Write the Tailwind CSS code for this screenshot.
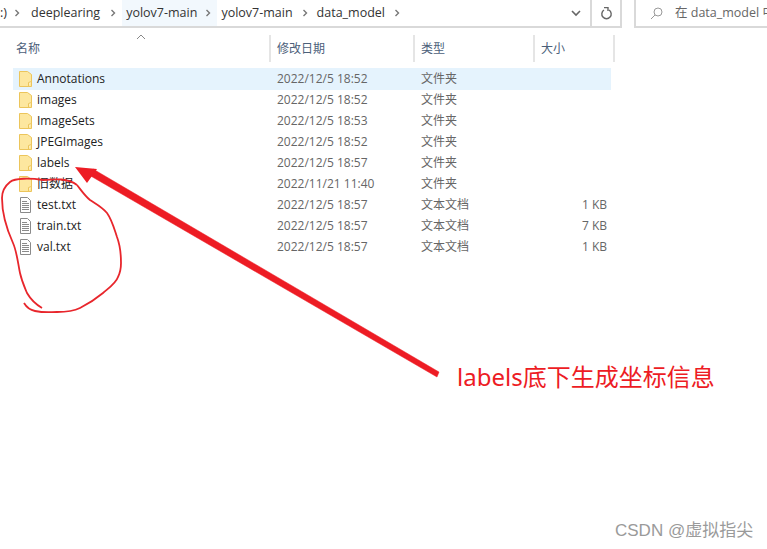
<!DOCTYPE html>
<html lang="zh">
<head>
<meta charset="utf-8">
<title>data_model</title>
<script src="https://cdn.jsdelivr.net/npm/@tailwindcss/browser@4"></script>
</head>
<body class="bg-white">
<div class="relative w-[767px] h-[549px] overflow-hidden bg-white font-['Open_Sans','Noto_Sans_CJK_SC',sans-serif] text-[12px]">

  <!-- address bar -->
  <div class="flex h-[28px] items-stretch">
    <div class="flex w-[622px] items-center border-b-2 border-r-2 border-[#d9d9d9] text-[#333]">
      <div class="flex w-[575px] items-center h-full text-[12.5px]">
        <span>:)</span>
        <svg class="ml-[7px] mr-[11px] h-2 w-1.5" viewBox="0 0 6 8" fill="none" stroke="#777" stroke-width="1.4"><path d="M1.5 1l3 3-3 3"/></svg>
        <span>deeplearing</span>
        <svg class="ml-[10px] mr-[6px] h-2 w-1.5" viewBox="0 0 6 8" fill="none" stroke="#777" stroke-width="1.4"><path d="M1.5 1l3 3-3 3"/></svg>
        <div class="flex h-full items-center bg-[#f2f8fd]">
          <span class="pl-[4px] pr-[4px]">yolov7-main</span>
          <svg class="ml-[4px] mr-[6px] h-2 w-1.5" viewBox="0 0 6 8" fill="none" stroke="#777" stroke-width="1.4"><path d="M1.5 1l3 3-3 3"/></svg>
        </div>
        <span class="ml-[4px]">yolov7-main</span>
        <svg class="ml-[9px] mr-[9px] h-2 w-1.5" viewBox="0 0 6 8" fill="none" stroke="#777" stroke-width="1.4"><path d="M1.5 1l3 3-3 3"/></svg>
        <span>data_model</span>
        <svg class="ml-[9px] h-2 w-1.5" viewBox="0 0 6 8" fill="none" stroke="#777" stroke-width="1.4"><path d="M1.5 1l3 3-3 3"/></svg>
      </div>
      <svg class="ml-[-4px] h-2 w-[10px]" viewBox="0 0 10 8" fill="none" stroke="#666" stroke-width="1.6"><path d="M1 2l4 4 4-4"/></svg>
      <div class="ml-[9px] flex h-full w-[30px] items-center justify-center border-l-2 border-[#d9d9d9]">
        <svg class="h-[13px] w-[13px]" viewBox="0 0 13 13" fill="none" stroke="#666" stroke-width="1.4"><path d="M9 3a4.7 4.7 0 1 1-5 0"/><path d="M4 .5h4v3.500"/></svg>
      </div>
    </div>
    <div class="ml-[12px] flex flex-1 items-center border-b-2 border-l-2 border-[#d9d9d9] pl-[14px] text-[#666] text-[12.5px] whitespace-nowrap">
      <svg class="mr-[12px] h-[13px] w-[13px] shrink-0" viewBox="0 0 13 13" fill="none" stroke="#999" stroke-width="1"><circle cx="8" cy="5" r="4"/><path d="M5 8l-4 4"/></svg>
      <span>在 data_model 中</span>
    </div>
  </div>

  <!-- column headers -->
  <div class="relative mt-[7px] flex h-[27px] pl-[16px] text-[#4c607a]">
    <svg class="absolute left-[136px] -top-[1px] h-[6px] w-[10px]" viewBox="0 0 10 6" fill="none" stroke="#888" stroke-width="1"><path d="M1 5l4-4 4 4"/></svg>
    <div class="flex w-[255px] items-center border-r-2 border-[#e5e5e5]">名称</div>
    <div class="flex w-[144px] items-center border-r-2 border-[#e5e5e5] pl-[6px]">修改日期</div>
    <div class="flex w-[120px] items-center border-r-2 border-[#e5e5e5] pl-[6px]">类型</div>
    <div class="flex w-[80px] items-center border-r-2 border-[#e5e5e5] pl-[6px]">大小</div>
  </div>

  <!-- file rows -->
  <div class="mt-[6px] ml-[13px] w-[598px] text-[#666]">
    <div class="-mb-px flex h-[22px] items-center bg-[#e5f3fd]">
      <svg class="ml-[6px] h-[16px] w-[13px]" viewBox="0 0 13 16"><path d="M.5.5h8l4 3v12H.5z" fill="#fde79f" stroke="#ecc55b"/><path d="M9.500 15.500v-4l3-1" fill="#fdf0c4" stroke="#ecc55b"/></svg>
      <span class="ml-[5px] w-[240px] text-[#222]">Annotations</span>
      <span class="w-[144px]">2022/12/5 18:52</span><span>文件夹</span>
    </div>
    <div class="flex h-[21px] items-center">
      <svg class="ml-[6px] h-[16px] w-[13px]" viewBox="0 0 13 16"><path d="M.5.5h8l4 3v12H.5z" fill="#fde79f" stroke="#ecc55b"/><path d="M9.500 15.500v-4l3-1" fill="#fdf0c4" stroke="#ecc55b"/></svg>
      <span class="ml-[5px] w-[240px] text-[#222]">images</span>
      <span class="w-[144px]">2022/12/5 18:52</span><span>文件夹</span>
    </div>
    <div class="flex h-[21px] items-center">
      <svg class="ml-[6px] h-[16px] w-[13px]" viewBox="0 0 13 16"><path d="M.5.5h8l4 3v12H.5z" fill="#fde79f" stroke="#ecc55b"/><path d="M9.500 15.500v-4l3-1" fill="#fdf0c4" stroke="#ecc55b"/></svg>
      <span class="ml-[5px] w-[240px] text-[#222]">ImageSets</span>
      <span class="w-[144px]">2022/12/5 18:53</span><span>文件夹</span>
    </div>
    <div class="flex h-[21px] items-center">
      <svg class="ml-[6px] h-[16px] w-[13px]" viewBox="0 0 13 16"><path d="M.5.5h8l4 3v12H.5z" fill="#fde79f" stroke="#ecc55b"/><path d="M9.500 15.500v-4l3-1" fill="#fdf0c4" stroke="#ecc55b"/></svg>
      <span class="ml-[5px] w-[240px] text-[#222]">JPEGImages</span>
      <span class="w-[144px]">2022/12/5 18:52</span><span>文件夹</span>
    </div>
    <div class="flex h-[21px] items-center">
      <svg class="ml-[6px] h-[16px] w-[13px]" viewBox="0 0 13 16"><path d="M.5.5h8l4 3v12H.5z" fill="#fde79f" stroke="#ecc55b"/><path d="M9.500 15.500v-4l3-1" fill="#fdf0c4" stroke="#ecc55b"/></svg>
      <span class="ml-[5px] w-[240px] text-[#222]">labels</span>
      <span class="w-[144px]">2022/12/5 18:57</span><span>文件夹</span>
    </div>
    <div class="flex h-[21px] items-center">
      <svg class="ml-[6px] h-[16px] w-[13px]" viewBox="0 0 13 16"><path d="M.5.5h8l4 3v12H.5z" fill="#fde79f" stroke="#ecc55b"/><path d="M9.500 15.500v-4l3-1" fill="#fdf0c4" stroke="#ecc55b"/></svg>
      <span class="ml-[5px] w-[240px] text-[#222]">旧数据</span>
      <span class="w-[144px]">2022/11/21 11:40</span><span>文件夹</span>
    </div>
    <div class="flex h-[21px] items-center">
      <svg class="ml-[6px] h-[16px] w-[13px]" viewBox="0 0 13 16" fill="#fff" stroke="#8a8a8a"><path d="M1.500.5h7l3 3v12h-10z"/><path d="M3 4.500h5M3 6.500h7M3 8.500h7M3 10.500h7M3 12.500h7" stroke-width="1"/></svg>
      <span class="ml-[5px] w-[240px] text-[#222]">test.txt</span>
      <span class="w-[144px]">2022/12/5 18:57</span><span class="w-[150px]">文本文档</span><span class="w-[36px] text-right">1 KB</span>
    </div>
    <div class="flex h-[21px] items-center">
      <svg class="ml-[6px] h-[16px] w-[13px]" viewBox="0 0 13 16" fill="#fff" stroke="#8a8a8a"><path d="M1.500.5h7l3 3v12h-10z"/><path d="M3 4.500h5M3 6.500h7M3 8.500h7M3 10.500h7M3 12.500h7" stroke-width="1"/></svg>
      <span class="ml-[5px] w-[240px] text-[#222]">train.txt</span>
      <span class="w-[144px]">2022/12/5 18:57</span><span class="w-[150px]">文本文档</span><span class="w-[36px] text-right">7 KB</span>
    </div>
    <div class="flex h-[21px] items-center">
      <svg class="ml-[6px] h-[16px] w-[13px]" viewBox="0 0 13 16" fill="#fff" stroke="#8a8a8a"><path d="M1.500.5h7l3 3v12h-10z"/><path d="M3 4.500h5M3 6.500h7M3 8.500h7M3 10.500h7M3 12.500h7" stroke-width="1"/></svg>
      <span class="ml-[5px] w-[240px] text-[#222]">val.txt</span>
      <span class="w-[144px]">2022/12/5 18:57</span><span class="w-[150px]">文本文档</span><span class="w-[36px] text-right">1 KB</span>
    </div>
  </div>

  <!-- hand drawn annotation on top of the screenshot -->
  <svg class="absolute inset-0 h-[549px] w-[767px]" viewBox="0 0 767 549" fill="none">
    <path d="M77 185C68 178 55 179 43 180C30 178 15 178 10 182C5 186 2 190 2 198C2 215 8 232 13 243C17 252 18 264 20 273C22 282 25 288 27 293C31 300 37 305 42 308" stroke="#e8262c" stroke-width="1.800"/>
    <path d="M24 303C27 308 30 310 35 311C45 313 50 312 57 312C68 312 74 311 80 308C88 304 97 298 103 293C110 287 116 283 118 277C121 271 121 268 121 263C121 252 120 245 117 237C114 228 112 220 107 213C102 207 96 204 90 200C85 196 81 190 77 185" stroke="#e8262c" stroke-width="1.800"/>
    <path d="M93 169L439 372L437 377L89 175Z" fill="#ed1c24" stroke="#ed1c24" stroke-width=".5" stroke-linejoin="round"/>
    <path d="M75 167L97 169L87 183Z" fill="#ed1c24"/>
  </svg>
  <span class="absolute left-[457px] top-[361px] text-[24px] leading-[32px] text-[#ed1c24] whitespace-nowrap font-['Noto_Sans','Noto_Sans_CJK_SC',sans-serif]">labels底下生成坐标信息</span>
  <span class="absolute left-[615px] top-[520px] text-[17px] leading-[22px] text-[#9a9a9a] whitespace-nowrap font-['Liberation_Sans','Noto_Sans_CJK_SC',sans-serif]">CSDN @虚拟指尖</span>
</div>
</body>
</html>
